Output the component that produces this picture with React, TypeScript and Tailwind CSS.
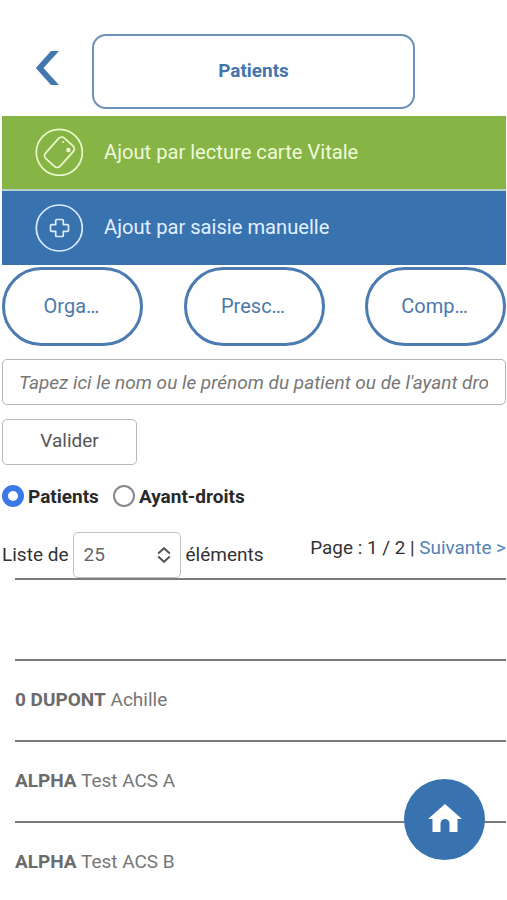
import { useState } from "react";

const shortcuts = ["Orga…", "Presc…", "Comp…"];

const patients = [
  { lastName: "", firstName: "" },
  { lastName: "0 DUPONT", firstName: "Achille" },
  { lastName: "ALPHA", firstName: "Test ACS A" },
  { lastName: "ALPHA", firstName: "Test ACS B" },
];

const CardIcon = () => (
  <svg className="h-12 w-12" viewBox="0 0 48 48" fill="none" stroke="#ebf8cc" strokeWidth="1.7">
    <circle cx="24.3" cy="24.3" r="23" />
    <rect x="10.6" y="14.5" width="27.6" height="19.6" rx="4" transform="rotate(-48 24.4 24.3)" strokeWidth="1.8" />
    <circle cx="33.4" cy="22" r="2.2" fill="#f0fbd8" stroke="none" />
    <circle cx="28.2" cy="14" r="1.1" fill="#f0fbd8" stroke="none" />
  </svg>
);

const PlusIcon = () => (
  <svg className="h-12 w-12" viewBox="0 0 48 48" fill="none" stroke="#dcecff" strokeWidth="1.7">
    <circle cx="24.3" cy="24" r="23" />
    <path d="M21.7 15.5h5.6a1 1 0 0 1 1 1v4.2h4.2a1 1 0 0 1 1 1v4.6a1 1 0 0 1-1 1h-4.2v4.2a1 1 0 0 1-1 1h-5.6a1 1 0 0 1-1-1v-4.2h-4.2a1 1 0 0 1-1-1v-4.6a1 1 0 0 1 1-1h4.2v-4.2a1 1 0 0 1 1-1z" strokeLinejoin="round" />
  </svg>
);

const App = () => {
  const [search, setSearch] = useState("");
  const [kind, setKind] = useState("patients");

  return (
    <div className="relative h-[900px] w-[507px] overflow-hidden bg-[#fefefe] pt-[34px] pr-px pl-0.5 font-['Roboto',sans-serif] text-[19px] text-[#333]">
      {/* Header */}
      <header className="flex h-[81.5px] items-start">
        <button type="button" aria-label="Retour" className="mt-4 ml-[33px] h-9 w-6">
          <svg className="h-9 w-6" viewBox="0 0 24 36" fill="#4377ad">
            <path d="M16 1h8L8.5 18 24 35h-8L.8 18z" />
          </svg>
        </button>
        <h1 className="ml-[33px] flex h-[75px] w-[323px] items-center justify-center rounded-[14px] border-2 border-[#6c90b8] text-[18.9px] font-bold text-[#4375ad]">Patients</h1>
      </header>

      {/* Add actions */}
      <div className="flex flex-col gap-0.5 bg-[#b5d3cb]">
        <button type="button" className="flex h-[73.5px] w-full items-center bg-[#86b545] pl-[33px] text-[20.15px] text-[#f0f9dc]">
          <CardIcon />
          <span className="ml-[21px]">Ajout par lecture carte Vitale</span>
        </button>
        <button type="button" className="flex h-[74px] w-full items-center bg-[#3873b0] pl-[33px] text-[20.15px] text-[#e3efff]">
          <PlusIcon />
          <span className="-mt-0.5 ml-[21px]">Ajout par saisie manuelle</span>
        </button>
      </div>

      {/* Shortcuts */}
      <nav className="mt-0.5 flex justify-between">
        {shortcuts.map((label) => (
          <button type="button" key={label} className="h-[79px] w-[141px] rounded-[40px] border-3 border-[#4b7bb0] pr-0.5 pb-0.5 text-[20px] text-[#4c79ab]">{label}</button>
        ))}
      </nav>

      {/* Search */}
      <input type="text" value={search} onChange={(e) => setSearch(e.target.value)} placeholder="Tapez ici le nom ou le prénom du patient ou de l'ayant droit" className="mt-[13px] block h-[46px] w-full rounded-[5px] border-[1.5px] border-[#b4b4b4] pr-[17px] pl-4 text-[19px] italic placeholder:text-[#777]" />
      <button type="button" className="mt-[14px] block h-[46px] w-[135px] rounded-[5px] border-[1.5px] border-[#b8b8b8] pb-0.5 text-[19px] text-[#555]">Valider</button>

      <div className="mt-[18px] flex h-7 items-center font-bold text-[#292929]">
        <label className="flex items-center">
          <input type="radio" name="kind" checked={kind === "patients"} onChange={() => setKind("patients")} className="-mt-0.5 mr-1 h-[22px] w-[22px] appearance-none rounded-full border-2 border-[#888] checked:border-[6.5px] checked:border-[#3c78e7]" />
          Patients
        </label>
        <label className="ml-[14px] flex items-center">
          <input type="radio" name="kind" checked={kind === "ayants"} onChange={() => setKind("ayants")} className="-mt-0.5 mr-1 h-[22px] w-[22px] appearance-none rounded-full border-2 border-[#888] checked:border-[6.5px] checked:border-[#3c78e7]" />
          Ayant-droits
        </label>
      </div>

      {/* Pagination */}
      <div className="mt-[21px] flex h-[46px] items-center">
        <span>Liste de</span>
        <button type="button" className="ml-[5px] flex h-[46px] w-[108px] items-center justify-between rounded-[5px] border-[1.5px] border-[#c0c0c0] pr-2 pl-[9px] text-[19px] text-[#666]">
          25
          <svg className="h-4 w-4" viewBox="0 0 16 16" fill="none" stroke="#555" strokeWidth="2">
            <path d="M2.2 6.5 8 1.2l5.8 5.3M2.2 9.5 8 14.8l5.8-5.3" />
          </svg>
        </button>
        <span className="ml-1">éléments</span>
        <span className="ml-auto -mt-[13px] text-[18.9px]">
          Page : 1 / 2 | <a href="#" className="text-[#5582b5]">Suivante &gt;</a>
        </span>
      </div>

      {/* Patient list */}
      <ul className="ml-[13px]">
        {patients.map((patient, index) => (
          <li key={index} className="flex h-[81px] items-center border-t-2 border-[#7b7b7b] text-[#777]">
            <p>
              <b className="text-[#6b6b6b]">{patient.lastName}</b> {patient.firstName}
            </p>
          </li>
        ))}
      </ul>

      {/* Floating home button */}
      <button type="button" aria-label="Accueil" className="absolute top-[779px] left-[404px] flex h-[81px] w-[81px] items-center justify-center rounded-full bg-[#3873b0]">
        <svg className="-mt-1 h-7 w-[34px]" viewBox="0 0 34 28" fill="#fff">
          <path d="M17 0 34 15h-4.5v13h-8v-8.5a4.5 4.5 0 0 0-9 0V28h-8V15H0z" />
        </svg>
      </button>
    </div>
  );
};

export default App;
